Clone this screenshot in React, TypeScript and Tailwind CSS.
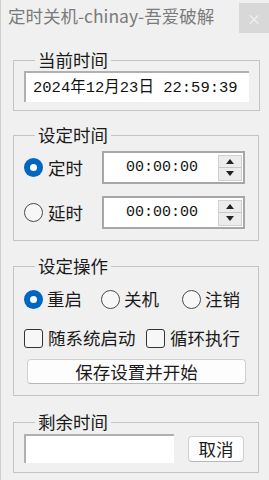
import React from "react";

const font = { fontFamily: '"Noto Sans CJK SC", "Noto Sans", sans-serif' };
const mono = { fontFamily: '"Liberation Mono", "Noto Sans CJK SC", monospace' };

function Radio({ checked }: { checked?: boolean }) {
  return checked ? (
    <span className="flex h-[19px] w-[19px] shrink-0 items-center justify-center rounded-full bg-[#0067c0]">
      <span className="h-[7px] w-[7px] rounded-full bg-white" />
    </span>
  ) : (
    <span className="h-[19px] w-[19px] shrink-0 rounded-full border border-[#4a4a4a] bg-[#f7f7f7]" />
  );
}

function Check() {
  return <span className="h-[19px] w-[19px] shrink-0 rounded-[3px] border border-[#333] bg-[#f7f7f7]" />;
}

function Group({ label, children, className }: { label: string; children: React.ReactNode; className?: string }) {
  return (
    <fieldset className={"mx-[12px] w-[246px] border border-[#c4c4c4] px-[10px] " + (className ?? "")}>
      <legend className="ml-[11px] px-[3px] text-[17.5px] leading-[20px] text-[#1a1a1a]">{label}</legend>
      {children}
    </fieldset>
  );
}

function Spin() {
  return (
    <div className="flex h-[33px] w-[143px] items-center border-2 border-[#a7a7a7] bg-white">
      <div className="flex-1 pl-[2px] text-center text-[15px] leading-[20px] text-[#111]" style={mono}>00:00:00</div>
      <div className="mr-[1px] flex h-[26px] w-[24px] flex-col border border-[#d0d0d0] bg-[#ececec]">
        <div className="flex flex-1 items-center justify-center border-b border-[#c8c8c8]">
          <svg width="8" height="5" viewBox="0 0 8 5"><path d="M0 5 L4 0 L8 5 Z" fill="#222" /></svg>
        </div>
        <div className="flex flex-1 items-center justify-center">
          <svg width="8" height="5" viewBox="0 0 8 5"><path d="M0 0 L4 5 L8 0 Z" fill="#222" /></svg>
        </div>
      </div>
    </div>
  );
}

export default function App() {
  return (
    <div className="h-[480px] w-[269px] overflow-hidden border-l border-[#cfcfcf] bg-[#f0f0f0] text-[#1a1a1a]" style={font}>
      <div className="flex h-[33px] items-start justify-between">
        <div className="pl-[7px] pt-[5px] text-[17.5px] leading-[22px] text-[#7b7b7b]">定时关机-chinay-吾爱破解</div>
        <div className="mt-[3px] flex h-[30px] w-[30px] items-center justify-center bg-[#d8d8d8] text-[14px] leading-none text-[#f4f4f4]">×</div>
      </div>

      <Group label="当前时间" className="mt-[17px] pb-[8px] pt-[1px]">
        <div className="flex h-[31px] w-[225px] items-center border-l-2 border-t-2 border-[#b0b0b0] bg-white pl-[7px] text-[15.5px] leading-[20px] text-[#111]" style={mono}>
          2024年12月23日 22:59:39
        </div>
      </Group>

      <Group label="设定时间" className="mt-[14px] pb-[11px] pt-[6px]">
        <div className="flex flex-col gap-[12px]">
          <div className="flex items-center">
            <div className="flex w-[78px] items-center gap-[5px]">
              <Radio checked />
              <span className="text-[17.5px] leading-[22px]">定时</span>
            </div>
            <Spin />
          </div>
          <div className="flex items-center">
            <div className="flex w-[78px] items-center gap-[5px]">
              <Radio />
              <span className="text-[17.5px] leading-[22px]">延时</span>
            </div>
            <Spin />
          </div>
        </div>
      </Group>

      <Group label="设定操作" className="mt-[15px] pb-[11px] pt-[11px]">
        <div className="flex h-[24px] items-center">
          <div className="flex w-[77px] items-center gap-[4px]">
            <Radio checked />
            <span className="text-[17.5px] leading-[22px]">重启</span>
          </div>
          <div className="flex w-[81px] items-center gap-[4px]">
            <Radio />
            <span className="text-[17.5px] leading-[22px]">关机</span>
          </div>
          <div className="flex items-center gap-[4px]">
            <Radio />
            <span className="text-[17.5px] leading-[22px]">注销</span>
          </div>
        </div>
        <div className="mt-[15px] flex h-[24px] items-center">
          <div className="flex w-[122px] items-center gap-[5px]">
            <Check />
            <span className="text-[17.5px] leading-[22px]">随系统启动</span>
          </div>
          <div className="flex items-center gap-[5px]">
            <Check />
            <span className="text-[17.5px] leading-[22px]">循环执行</span>
          </div>
        </div>
        <div className="ml-[3px] mt-[9px] flex h-[25px] w-[219px] items-center justify-center rounded-[4px] border border-[#d0d0d0] border-b-[#b8b8b8] bg-[#fdfdfd] text-[17.5px] leading-[22px]">
          保存设置并开始
        </div>
      </Group>

      <Group label="剩余时间" className="mt-[16px] pb-[9px] pt-[2px]">
        <div className="flex items-center">
          <div className="h-[29px] w-[150px] border-l-2 border-t-2 border-[#b0b0b0] bg-white" />
          <div className="ml-[14px] flex h-[26px] w-[56px] items-center justify-center rounded-[4px] border border-[#d0d0d0] border-b-[#b8b8b8] bg-[#fdfdfd] text-[17.5px] leading-[22px]">
            取消
          </div>
        </div>
      </Group>
    </div>
  );
}
